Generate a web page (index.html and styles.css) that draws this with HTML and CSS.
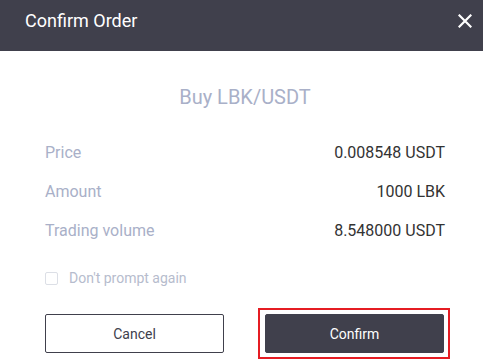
FILE: index.html
```html
<!DOCTYPE html>
<html>
<head>
<meta charset="utf-8">
<link rel="stylesheet" href="styles.css">
</head>
<body>
<div class="dialog">
  <div class="header">
    <span class="title">Confirm Order</span>
    <svg class="close" width="14" height="14" viewBox="0 0 14 14"><path d="M1.5 1.5 L12.5 12.5 M12.5 1.5 L1.5 12.5" stroke="#fff" stroke-width="2.2" stroke-linecap="square"/></svg>
  </div>
  <div class="content">
    <div class="pair">Buy LBK/USDT</div>
    <div class="rows">
      <div class="row"><span class="label">Price</span><span class="value">0.008548 USDT</span></div>
      <div class="row"><span class="label">Amount</span><span class="value">1000 LBK</span></div>
      <div class="row"><span class="label">Trading volume</span><span class="value">8.548000 USDT</span></div>
    </div>
    <label class="check"><span class="box"></span><span class="check-text">Don't prompt again</span></label>
    <div class="actions">
      <button class="btn btn-cancel">Cancel</button>
      <button class="btn btn-confirm">Confirm</button>
    </div>
  </div>
</div>
</body>
</html>
```
FILE: styles.css
```css
html, body {
  margin: 0;
  padding: 0;
  background: #fff;
}
body {
  font-family: Roboto, "Liberation Sans", sans-serif;
  width: 483px;
  height: 363px;
  overflow: hidden;
}
.header {
  height: 51px;
  background: #40404c;
  display: flex;
  align-items: flex-start;
  justify-content: space-between;
  padding: 9px 11px 0 25px;
  box-sizing: border-box;
}
.title {
  color: #fff;
  font-size: 18px;
  line-height: 24px;
}
.close {
  margin-top: 5px;
}
.content {
  padding: 0 38px 0 45px;
}
.pair {
  text-align: center;
  color: #a9b0c8;
  font-size: 20px;
  line-height: 26px;
  margin-top: 33px;
}
.rows {
  margin-top: 32px;
  display: flex;
  flex-direction: column;
  gap: 17px;
}
.row {
  display: flex;
  justify-content: space-between;
  font-size: 16px;
  line-height: 22px;
}
.label {
  color: #a9b0c8;
}
.value {
  color: #333;
}
.check {
  display: flex;
  align-items: center;
  margin-top: 27px;
  gap: 11px;
}
.box {
  width: 11px;
  height: 11px;
  border: 1px solid #dcdfe6;
  border-radius: 2px;
}
.check-text {
  color: #b6bccd;
  font-size: 14px;
  line-height: 18px;
}
.actions {
  display: flex;
  justify-content: space-between;
  margin-top: 27px;
}
.btn {
  width: 179px;
  height: 39px;
  border-radius: 2px;
  font-family: Roboto, "Liberation Sans", sans-serif;
  font-size: 14px;
  box-sizing: border-box;
  padding: 0;
}
.btn-cancel {
  background: #fff;
  border: 1px solid #40404c;
  color: #40404c;
}
.btn-confirm {
  position: relative;
  background: #40404c;
  border: 1px solid #40404c;
  color: #fff;
  margin-right: 1px;
}
.btn-confirm::after {
  content: "";
  position: absolute;
  top: -7px;
  bottom: -7px;
  left: -8px;
  right: -7px;
  border: 2px solid #e51c23;
}
```
